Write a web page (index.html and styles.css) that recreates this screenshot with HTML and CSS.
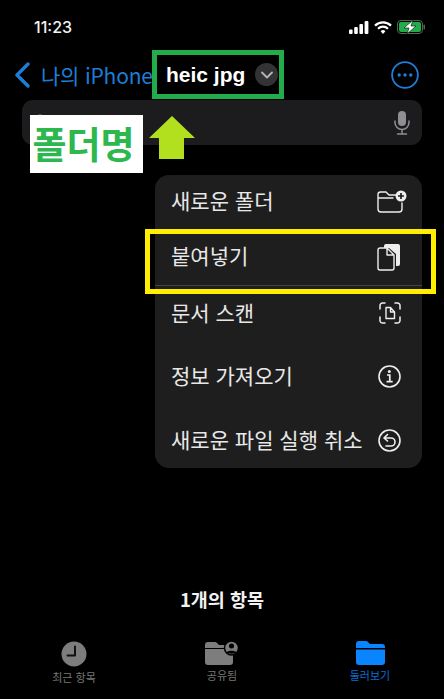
FILE: index.html
```html
<!doctype html>
<html lang="ko">
<head>
    <meta charset="UTF-8">
    <meta name="viewport" content="width=device-width, initial-scale=1.0">
    <title>heic jpg</title>
    <link rel="stylesheet" href="styles.css">
</head>
<body>
<div class="screen">
    <div class="status">
        <span class="time">11:23</span>
        <div class="status-icons">
            <svg width="20" height="13" viewBox="0 0 20 13"><g fill="#fff"><rect x="0" y="8.5" width="3.6" height="4.5" rx="1"/><rect x="5.2" y="6" width="3.6" height="7" rx="1"/><rect x="10.4" y="3" width="3.6" height="10" rx="1"/><rect x="15.6" y="0" width="3.8" height="13" rx="1"/></g></svg>
            <svg width="18" height="13" viewBox="0 0 18 13"><g fill="none" stroke="#fff" stroke-width="2.2"><path d="M1 4.6a11.4 11.4 0 0 1 16 0"/><path d="M4 7.8a7 7 0 0 1 10 0"/></g><path d="M6.6 10.2a3.4 3.4 0 0 1 4.8 0L9 13z" fill="#fff"/></svg>
            <svg width="29" height="14" viewBox="0 0 29 14"><rect x=".5" y=".5" width="25" height="13" rx="3.5" fill="none" stroke="#4f6b50"/><rect x="2" y="2" width="22" height="10" rx="2" fill="#22ac4c"/><rect x="26.5" y="4.5" width="1.5" height="5" rx=".7" fill="#5c5c5c"/><path d="M16 0 7 8h5l-2 6 9-8h-5z" fill="#fff" stroke="#0b2a12" stroke-width=".7"/></svg>
        </div>
    </div>

    <div class="nav">
        <svg class="back-icon" width="17" height="26" viewBox="0 0 17 26"><path d="M14 2 3 13l11 11" fill="none" stroke="#1c7ed6" stroke-width="3.4" stroke-linecap="round" stroke-linejoin="round"/></svg>
        <a class="back-label" href="javascript:;">나의 iPhone</a>
        <div class="title-box">
            <h1 class="title">heic jpg</h1>
            <span class="title-btn">
                <svg width="12" height="8" viewBox="0 0 12 8"><path d="M1 1.5 6 6.5l5-5" fill="none" stroke="#b5b5b9" stroke-width="1.8" stroke-linecap="round" stroke-linejoin="round"/></svg>
            </span>
        </div>
        <svg class="more-icon" width="28" height="28" viewBox="0 0 28 28"><circle cx="14" cy="14" r="12.9" fill="none" stroke="#1c7ed6" stroke-width="1.8"/><g fill="#1c7ed6"><circle cx="8.2" cy="14" r="1.7"/><circle cx="14" cy="14" r="1.7"/><circle cx="19.8" cy="14" r="1.7"/></g></svg>
    </div>

    <div class="search">
        <svg width="18" height="18" viewBox="0 0 18 18"><circle cx="8" cy="8" r="6.5" fill="none" stroke="#98989e" stroke-width="1.8"/><path d="m13 13 4 4" stroke="#98989e" stroke-width="1.8"/></svg>
        <span class="search-text">검색</span>
        <svg class="mic-icon" width="16" height="24" viewBox="0 0 16 24"><rect x="4" y="0" width="8" height="15" rx="4" fill="#8e8e93"/><path d="M1 10v1.500a7 7 0 0 0 14 0V10M8 18.500V23M3.500 23h9" fill="none" stroke="#8e8e93" stroke-width="1.500" stroke-linecap="round"/></svg>
    </div>

    <ul class="menu">
        <li class="menu-item item-a">
            <span>새로운 폴더</span>
            <svg class="folder-icon" width="30" height="24" viewBox="0 0 30 24"><path d="M1 17.500V4.500a2.500 2.500 0 0 1 2.500-2.500h5.500l3 3h8M1 8h15M25 13v6a3 3 0 0 1-3 3H4a3 3 0 0 1-3-3v-3" fill="none" stroke="#eee" stroke-width="1.400" stroke-linecap="round" stroke-linejoin="round"/><circle cx="24" cy="6" r="5.500" fill="#eee"/><path d="M24 3v6M21 6h6" stroke="#1e1e1e" stroke-width="1.700"/></svg>
        </li>
        <li class="menu-item item-b">
            <span>붙여넣기</span>
            <svg width="24" height="28" viewBox="0 0 24 28"><path d="M7 5V3a2 2 0 0 1 2-2h12a2 2 0 0 1 2 2v18a2 2 0 0 1-2 2h-2V11l-7-6z" fill="#eee"/><path d="M10 5H3a2 2 0 0 0-2 2v18a2 2 0 0 0 2 2h12a2 2 0 0 0 2-2V12zM10 5v7h7" fill="#1e1e1e" stroke="#eee" stroke-width="1.400" stroke-linejoin="round"/></svg>
        </li>
        <li class="menu-item item-c">
            <span>문서 스캔</span>
            <svg width="22" height="22" viewBox="0 0 22 22"><path d="M1 7V3.500A2.500 2.500 0 0 1 3.500 1H6M16 1h2.500A2.500 2.500 0 0 1 21 3.500V7M21 15v3.500a2.500 2.500 0 0 1-2.500 2.500H16M6 21H3.500A2.500 2.500 0 0 1 1 18.500V15" fill="none" stroke="#eee" stroke-width="1.500" stroke-linecap="round"/><path d="M7 5.500h4.500L15.500 10v6.500H7zM11.500 5.500V10h4" fill="none" stroke="#eee" stroke-width="1.400" stroke-linejoin="round"/></svg>
        </li>
        <li class="menu-item item-d">
            <span>정보 가져오기</span>
            <svg width="23" height="23" viewBox="0 0 23 23"><circle cx="11.500" cy="11.500" r="10.500" fill="none" stroke="#eee" stroke-width="1.600"/><circle cx="11.300" cy="6.500" r="1.500" fill="#eee"/><path d="M9 10h2.800v6.500M8.500 16.700h6.200" fill="none" stroke="#eee" stroke-width="1.700"/></svg>
        </li>
        <li class="menu-item item-e">
            <span>새로운 파일 실행 취소</span>
            <svg width="23" height="23" viewBox="0 0 23 23"><circle cx="11.500" cy="11.500" r="10.500" fill="none" stroke="#eee" stroke-width="1.600"/><path d="M9.500 5.500 6 9l3.500 3M6.500 9H13a3.500 3.500 0 0 1 0 8H8" fill="none" stroke="#eee" stroke-width="1.600" stroke-linecap="round" stroke-linejoin="round"/></svg>
        </li>
    </ul>

    <p class="count">1개의 항목</p>

    <div class="tabs">
        <div class="tab">
            <svg width="26" height="26" viewBox="0 0 26 26"><circle cx="13" cy="13" r="12.500" fill="#7d7d7d"/><path d="M14 5.500V14.500H6.500" fill="none" stroke="#111" stroke-width="2" stroke-linecap="round" stroke-linejoin="round"/></svg>
            <span>최근 항목</span>
        </div>
        <div class="tab">
            <svg width="34" height="24" viewBox="0 0 34 24"><path d="M0 4a3 3 0 0 1 3-3h7a3 3 0 0 1 2 1l2 2h13v3H0zM0 8h28v13a3 3 0 0 1-3 3H3a3 3 0 0 1-3-3z" fill="#7d7d7d"/><circle cx="26.500" cy="7" r="7" fill="#7d7d7d" stroke="#000" stroke-width="1.500"/><circle cx="26.500" cy="5" r="2.500" fill="#000"/><path d="M21.500 11.500c1-2.500 9-2.500 10 0-2 1.500-8 1.500-10 0z" fill="#000"/></svg>
            <span>공유됨</span>
        </div>
        <div class="tab tab-active">
            <svg width="29" height="24" viewBox="0 0 29 24"><path d="M0 3a3 3 0 0 1 3-3h7a3 3 0 0 1 2 1l2 2h12a3 3 0 0 1 3 3v1H0zM0 8.500h29V21a3 3 0 0 1-3 3H3a3 3 0 0 1-3-3z" fill="#0a84ff"/></svg>
            <span>둘러보기</span>
        </div>
    </div>

    <!-- annotations added on top of the screenshot -->
    <div class="note-label">폴더명</div>
    <svg class="note-arrow" width="46" height="43" viewBox="0 0 46 43"><path d="M23 0 46 22H35V43H10V22H0z" fill="#b2e01e"/></svg>
    <div class="note-paste"></div>
</div>
</body>
</html>
```

FILE: styles.css
```css
* {
    margin: 0;
    padding: 0;
    box-sizing: border-box;
}

li {
    list-style: none;
}

a {
    text-decoration: none;
}

html,
body {
    width: 444px;
    height: 699px;
    overflow: hidden;
    background: #000;
}

body {
    font-family: "Noto Sans CJK KR", "Liberation Sans", sans-serif;
    color: #fff;
}

.screen {
    position: relative;
    display: flex;
    flex-direction: column;
    height: 699px;
}

.status {
    display: flex;
    justify-content: space-between;
    align-items: center;
    height: 50px;
    padding: 4px 18px 0 34px;
}

.time {
    font-family: Inter, "Liberation Sans", sans-serif;
    font-size: 16px;
    font-weight: 500;
    color: #f2f2f2;
}

.status-icons {
    display: flex;
    align-items: center;
    gap: 5px;
}

.nav {
    display: flex;
    align-items: center;
    height: 49px;
    padding-left: 14px;
}

.back-label {
    width: 111px;
    margin-left: 10px;
    font-size: 21px;
    letter-spacing: -0.2px;
    white-space: nowrap;
    color: #1c7ed6;
}

.title-box {
    display: flex;
    flex: none;
    align-items: center;
    width: 132px;
    height: 49px;
    padding-left: 9px;
    border: 5px solid #22ac4c;
}

.title {
    width: 80px;
    font-family: "Liberation Sans", sans-serif;
    font-size: 21px;
    font-weight: 700;
    line-height: 1;
    white-space: nowrap;
    color: #fff;
}

.title-btn {
    display: flex;
    flex: none;
    justify-content: center;
    align-items: center;
    width: 23px;
    height: 23px;
    margin-left: 9px;
    border-radius: 50%;
    background: #333336;
}

.more-icon {
    margin-left: 107px;
}

.search {
    display: flex;
    align-items: center;
    gap: 8px;
    width: 400px;
    height: 45px;
    margin: 1px 0 0 22px;
    padding: 0 12px 0 10px;
    border-radius: 11px;
    background: #1c1c1e;
}

.search-text {
    font-size: 18px;
    color: #8e8e93;
}

.mic-icon {
    margin-left: auto;
}

.menu {
    display: flex;
    flex-direction: column;
    width: 267px;
    height: 293px;
    margin: 30px 0 0 155px;
    border-radius: 14px;
    background: #1e1e1e;
}

.menu-item {
    display: flex;
    justify-content: space-between;
    align-items: center;
    padding: 0 21px 0 16px;
    font-size: 21px;
    color: #e8e8e8;
    white-space: nowrap;
}

.menu-item span {
    padding-bottom: 3px;
}

.menu-item svg {
    flex: none;
}

.menu-item .folder-icon {
    margin-right: -6px;
}

.item-a {
    height: 53px;
}

.item-b {
    height: 58px;
    border-bottom: 1px solid #444;
}

.item-c {
    height: 54px;
}

.item-d {
    height: 73px;
}

.item-e {
    height: 55px;
}

.count {
    margin-top: 118px;
    font-size: 18.500px;
    font-weight: 700;
    line-height: 26px;
    text-align: center;
    color: #f2f2f2;
}

.tabs {
    display: grid;
    grid-template-columns: repeat(3, 148px);
    margin-top: 29px;
}

.tab {
    display: flex;
    flex-direction: column;
    align-items: center;
    gap: 2px;
    height: 46px;
    font-size: 11px;
    color: #777;
}

.tab svg {
    flex: none;
}

.tab-active {
    color: #0a6fd6;
}

.note-label {
    position: absolute;
    left: 30px;
    top: 115px;
    width: 113px;
    height: 58px;
    padding-right: 6px;
    background: #fff;
    font-size: 37px;
    font-weight: 700;
    line-height: 56px;
    text-align: center;
    white-space: nowrap;
    color: #2db84f;
}

.note-arrow {
    position: absolute;
    left: 149px;
    top: 116px;
}

.note-paste {
    position: absolute;
    left: 145px;
    top: 229px;
    width: 291px;
    height: 65px;
    border: 5px solid #ffee00;
}
```
